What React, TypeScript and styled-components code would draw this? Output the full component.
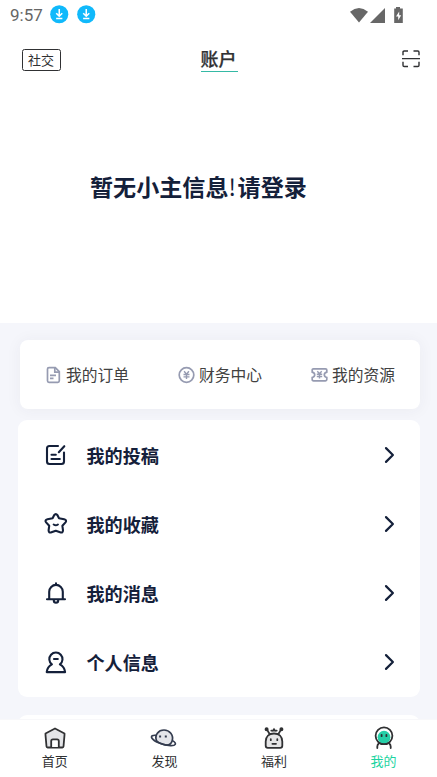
import React from 'react';
import styled, { createGlobalStyle } from 'styled-components';

const NAVY = '#14203a';
const INK = '#303133';
const MUTED = '#969bb1';

const GlobalStyle = createGlobalStyle`
  * { box-sizing: border-box; }
  body {
    margin: 0;
    background: #f5f6fb;
    font-family: "Noto Sans CJK SC", sans-serif;
  }
  svg { display: block; flex: none; overflow: visible; }
`;

const Screen = styled.div`
  width: 437px;
  height: 777px;
  display: flex;
  flex-direction: column;
  overflow: hidden;
`;

const Top = styled.section`
  flex: none;
  height: 323px;
  background: #fff;
  display: flex;
  flex-direction: column;
`;

const StatusBar = styled.div`
  height: 30px;
  padding: 0 33px 1px 10px;
  display: flex;
  align-items: center;
`;

const Clock = styled.span`
  width: 40px;
  font: 400 17px/30px Roboto, sans-serif;
  color: #666;
`;

const Downloads = styled.div`
  display: flex;
  gap: 8px;
  flex: 1;
`;

const Signals = styled.div`
  display: flex;
  align-items: center;
`;

const Header = styled.header`
  height: 58px;
  padding: 0 17px 0 22px;
  display: grid;
  grid-template-columns: 80px 1fr 80px;
  align-items: center;

  > svg { justify-self: end; }
`;

const SocialButton = styled.button`
  width: 39px;
  height: 22px;
  margin-top: 2px;
  padding: 0 1px 1px 0;
  border: 1.5px solid ${INK};
  border-radius: 2.5px;
  background: none;
  color: ${INK};
  font: 400 13px/18px "Noto Sans CJK SC", sans-serif;
`;

const Title = styled.h1`
  justify-self: center;
  width: 37px;
  height: 26px;
  margin: 0 4px 0 0;
  border-bottom: 1px solid #35b9a5;
  font-size: 18px;
  line-height: 24px;
  font-weight: 500;
  -webkit-text-stroke: 0.25px ${INK};
  color: ${INK};
  white-space: nowrap;
`;

const LoginPrompt = styled.h2`
  margin: 81px 0 0 90px;
  font-size: 23.1px;
  line-height: 34px;
  font-weight: 700;
  color: ${NAVY};
  white-space: nowrap;
`;

const Bang = styled.span`
  display: inline-block;
  width: 9px;
  font-weight: 400;
`;

const Content = styled.main`
  flex: 1;
  min-height: 0;
  overflow: hidden;
  padding: 17px 17px 0 18px;
  display: flex;
  flex-direction: column;
`;

const Shortcuts = styled.nav`
  flex: none;
  height: 69px;
  margin: 0 0 11px 2px;
  padding: 0 25px;
  border-radius: 8px;
  background: #fff;
  box-shadow: 0 1px 16px rgba(60, 50, 80, 0.055);
  display: flex;
  align-items: center;
  justify-content: space-between;
`;

const Shortcut = styled.a`
  display: flex;
  align-items: center;
  gap: 4px;
  font-size: 15.75px;
  line-height: 24px;
  color: #414141;
  white-space: nowrap;
`;

const Menu = styled.div`
  flex: none;
  height: 277px;
  margin-bottom: 18px;
  border-radius: 9px;
  background: #fff;
`;

const NextCard = styled.div`
  flex: none;
  height: 60px;
  border-radius: 9px;
  background: #fff;
`;

const MenuRow = styled.a`
  height: 69px;
  padding: 0 23px 0 26px;
  display: flex;
  align-items: center;
`;

const MenuLabel = styled.span`
  flex: 1;
  padding-left: 18.5px;
  font-size: 18.1px;
  line-height: 26px;
  font-weight: 700;
  color: ${NAVY};
`;

const TabBar = styled.nav`
  flex: none;
  height: 58px;
  border-top: 1px solid #f8f8fa;
  background: #fff;
  display: grid;
  grid-template-columns: repeat(4, 109.6px);
`;

const Tab = styled.a<{ $active?: boolean }>`
  padding-top: 5px;
  display: flex;
  flex-direction: column;
  align-items: center;
  font-size: 13px;
  line-height: 20px;
  color: ${p => (p.$active ? '#1bd4a0' : INK)};
`;

const DownloadBadge = () => (
  <svg width="18.5" height="18.5" viewBox="0 0 19 19">
    <circle cx="9.5" cy="9.5" r="9.3" fill="#10b9fb" />
    <path d="M9.5 4.2v7M6.4 8.4l3.1 3.1 3.1-3.1M6.3 13.8h6.4" fill="none" stroke="#fff" strokeWidth="1.6" />
  </svg>
);

const StatusIcons = () => (
  <svg width="54" height="16" viewBox="0 0 54 16" fill="#676767">
    <path d="M0 4.7Q9-2.5 18 4.7L9 15.5Z" />
    <path d="M35 1v15H20Z" />
    <path d="M46 0h4v1.5h2.8V16h-8.6V1.5H46Z" />
    <path d="M49.2 4.4 46 9.6h2.2v3.6l3-5h-2Z" fill="#fff" />
  </svg>
);

const ScanIcon = () => (
  <svg width="18" height="18" viewBox="0 0 18 18" fill="none" stroke={INK} strokeWidth="1.4">
    <path d="M1 5.3V2.2Q1 1 2.2 1H6M11.5 1h4.3Q17 1 17 2.2v3.1M1 11.7v3.6q0 1.2 1.2 1.2H6M11.5 16.5h4.3q1.2 0 1.2-1.2v-3.6M0 8.6h18" />
  </svg>
);

const OrderIcon = () => (
  <svg width="17" height="18" viewBox="0 0 17 18" fill="none" stroke={MUTED} strokeWidth="1.7">
    <path d="M4 1.6h6.3l4 4v9.2q0 1.5-1.5 1.5H4q-1.5 0-1.5-1.5V3.1Q2.5 1.6 4 1.6Z" />
    <path d="M9.8 1.8v4.3h4.3M5 9.3h6M5 12.4h3.5" />
  </svg>
);

const FinanceIcon = () => (
  <svg width="17" height="18" viewBox="0 0 17 18" fill="none" stroke={MUTED} strokeWidth="1.7">
    <circle cx="8.5" cy="9" r="7.3" />
    <path d="m6.1 5.3 2.4 2.9 2.4-2.9M8.5 8v5M5.5 8.5h6M5.5 10.9h6" strokeWidth="1.4" />
  </svg>
);

const ResourceIcon = () => (
  <svg width="17" height="18" viewBox="0 0 17 18" fill="none" stroke={MUTED} strokeWidth="1.7">
    <path d="M2.5 2.8h12q1.3 0 1.3 1.3v2q-2.5.7-2.5 2.7t2.5 2.7v2q0 1.3-1.3 1.3h-12q-1.3 0-1.3-1.3v-2q2.5-.7 2.5-2.7T1.2 6.1v-2q0-1.3 1.3-1.3Z" />
    <path d="m6.3 5.3 2.2 2.4 2.2-2.4M8.5 7.6v4.9M5.8 8.2h5.4M5.8 10.5h5.4" strokeWidth="1.4" />
  </svg>
);

const lineIcon = {
  width: 24,
  height: 24,
  viewBox: '0 0 24 24',
  fill: 'none',
  stroke: NAVY,
  strokeWidth: 2.1,
  strokeLinecap: 'round' as const,
  strokeLinejoin: 'round' as const,
};

const PostIcon = () => (
  <svg {...lineIcon}>
    <path d="M14 3H5.5Q3 3 3 5.5v13Q3 21 5.5 21h12q2.5 0 2.5-2.5V9.5M20.300 3.200l-5.500 6M7.500 11.800h4.300M7.500 16h8.300" />
  </svg>
);

const StarIcon = () => (
  <svg {...lineIcon}>
    <path d="M10.1 3.2q1.7-2.2 3.4 0L15 6.2l5.1 1.1q3.1.9 1.4 3.1L18.4 13.8l.6 4.5q-.1 3-2.9 2L11.8 18.7 7.5 20.3q-2.8 1-2.9-2l.6-4.5L2.1 10.4Q.4 8.2 3.5 7.3L8.6 6.2Z" />
    <path d="M9.7 12.5q2.1 1.4 4.2 0" />
  </svg>
);

const BellIcon = () => (
  <svg {...lineIcon}>
    <path d="M3 18.3h18M5.2 18v-7.3a6.8 6.8 0 0 1 13.6 0V18M12 2.4v1.3M9.8 19.5q0 2.2 2.2 2.2t2.2-2.2" />
  </svg>
);

const PersonIcon = () => (
  <svg {...lineIcon}>
    <path d="M7.9 14.4a6.6 6.6 0 1 1 8 0q4.6 2.3 5.2 7.7H2.7q.6-5.4 5.2-7.7ZM10 9h3.8" />
  </svg>
);

const Chevron = () => (
  <svg width="16" height="20" viewBox="0 0 16 20" fill="none" stroke={NAVY} strokeWidth="2.2" strokeLinecap="round" strokeLinejoin="round">
    <path d="m5 3.1 6.900 6.900L5 16.900" />
  </svg>
);

const HomeIcon = () => (
  <svg width="26" height="26" viewBox="0 0 26 26" fill="#e4e5e8" stroke={INK} strokeWidth="1.8" strokeLinejoin="round">
    <path d="m13 3.5 9.5 5V10l-1 11.5q-.1 1-1.1 1H5.6q-1 0-1.1-1L3.5 10V8.5Z" />
    <path d="M9.2 22v-6q0-1.7 1.7-1.7h4.2q1.7 0 1.7 1.7v6" fill="#fff" />
  </svg>
);

const PlanetIcon = () => (
  <svg width="26" height="26" viewBox="0 0 26 26" fill="none" stroke="#343c4f" strokeWidth="1.7">
    <path d="M5.6 15.8C3.2 9.8 7.5 5 13 5s10 5 8.1 11q-1.2 4-5.3 4.1Q8.5 19.2 5.6 15.8Z" fill="#e4e5ea" />
    <path d="M5.7 10.4C1.6 9.8-.5 11 1 13.2c2 3.2 11.5 7.2 18.5 7.5 5 .2 7-1.9 2-5.1" />
    <path d="M9.1 10.500v2M14.800 10.500v2" strokeWidth="2" />
  </svg>
);

const WelfareIcon = () => (
  <svg width="26" height="26" viewBox="0 0 26 26" fill="none" stroke={INK} strokeWidth="1.8" strokeLinecap="round">
    <path d="M4.7 20.8v-4.3C4.7 11.5 8 8.5 13 8.5s8.3 3 8.3 8v4.3q0 2-2 2H6.7q-2 0-2-2Z" fill="#e5e5e6" />
    <path d="M8.4 8.8 6.2 4.9M17.6 8.8l2.2-3.9M10.3 5.6l1.7.2 1-1.5 1 1.5 1.7-.2" />
    <circle cx="5.6" cy="4.3" r="1.1" fill={INK} />
    <circle cx="20.4" cy="4.3" r="1.1" fill={INK} />
    <path d="M9.8 14.2v1M16.3 14.2v1M11.4 18.8h3.6" />
  </svg>
);

const MineIcon = () => (
  <svg width="26" height="26" viewBox="0 0 26 26" fill="none" stroke={INK} strokeWidth="1.8" strokeLinecap="round">
    <circle cx="13" cy="10.8" r="8.4" fill="#fff" />
    <circle cx="13" cy="12.2" r="6.4" fill="#26cfa7" stroke="none" />
    <path d="M6.3 23v-1.5q0-2 1.7-3.3M19.7 23v-1.5q0-2-1.7-3.3M10.6 9.8v1.4M15.4 9.8v1.4" />
    <path d="M8.3 18q4.7 2.3 9.4 0" />
  </svg>
);

const menuItems = [
  { label: '我的投稿', Icon: PostIcon },
  { label: '我的收藏', Icon: StarIcon },
  { label: '我的消息', Icon: BellIcon },
  { label: '个人信息', Icon: PersonIcon },
];

const tabs = [
  { label: '首页', Icon: HomeIcon },
  { label: '发现', Icon: PlanetIcon },
  { label: '福利', Icon: WelfareIcon },
  { label: '我的', Icon: MineIcon, active: true },
];

export default function App() {
  return (
    <Screen>
      <GlobalStyle />
      <Top>
        <StatusBar>
          <Clock>9:57</Clock>
          <Downloads>
            <DownloadBadge />
            <DownloadBadge />
          </Downloads>
          <Signals>
            <StatusIcons />
          </Signals>
        </StatusBar>
        <Header>
          <SocialButton>社交</SocialButton>
          <Title>账户</Title>
          <ScanIcon />
        </Header>
        <LoginPrompt>
          暂无小主信息<Bang>!</Bang>请登录
        </LoginPrompt>
      </Top>
      <Content>
        <Shortcuts>
          <Shortcut><OrderIcon />我的订单</Shortcut>
          <Shortcut><FinanceIcon />财务中心</Shortcut>
          <Shortcut><ResourceIcon />我的资源</Shortcut>
        </Shortcuts>
        <Menu>
          {menuItems.map(({ label, Icon }) => (
            <MenuRow key={label}>
              <Icon />
              <MenuLabel>{label}</MenuLabel>
              <Chevron />
            </MenuRow>
          ))}
        </Menu>
        <NextCard />
      </Content>
      <TabBar>
        {tabs.map(({ label, Icon, active }) => (
          <Tab key={label} $active={active}>
            <Icon />
            {label}
          </Tab>
        ))}
      </TabBar>
    </Screen>
  );
}
